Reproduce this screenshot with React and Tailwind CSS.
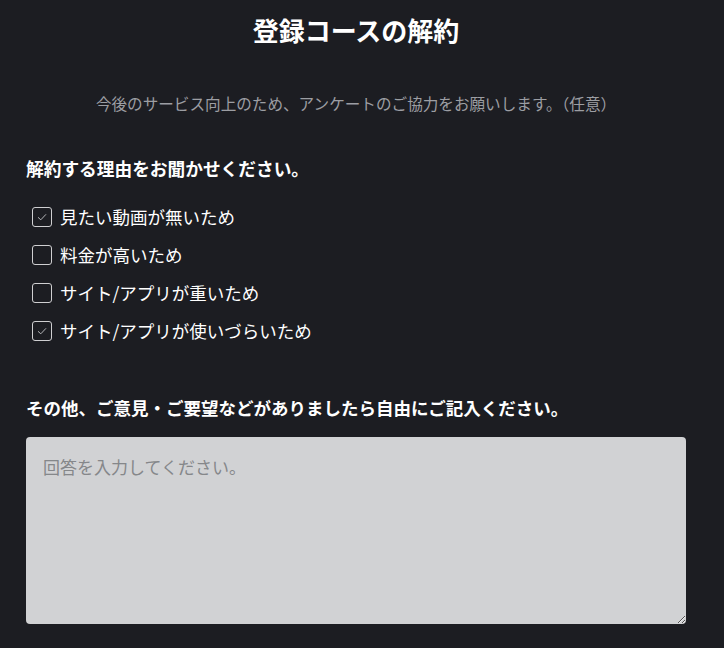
import React from "react";

const reasons = [
  { id: 1, label: "見たい動画が無いため", checked: true },
  { id: 2, label: "料金が高いため", checked: false },
  { id: 3, label: "サイト/アプリが重いため", checked: false },
  { id: 4, label: "サイト/アプリが使いづらいため", checked: true },
];

const Box = ({ checked }) => (
  <span className="w-[20px] h-[20px] mr-[8px] rounded-[3px] border border-[#cfcfd1] flex items-center justify-center shrink-0">
    {checked && (
      <svg width="14" height="14" viewBox="0 0 14 14" fill="none">
        <path d="M3 7.3 L5.8 9.8 L11 4.3" stroke="#b4b5b8" strokeWidth="1" />
      </svg>
    )}
  </span>
);

const App = () => {
  return (
    <div
      className="min-h-[648px] bg-[#1c1d22] text-white"
      style={{ fontFamily: '"Noto Sans CJK JP", "Noto Sans", sans-serif' }}
    >
      <div className="ml-[26px] w-[660px] pt-[12px]">
        <h1 className="text-center text-[26px] leading-[36px] font-bold">
          登録コースの解約
        </h1>
        <p className="mt-[43px] text-center text-[15.6px] leading-[24px] text-[#9c9ea3]">
          今後のサービス向上のため、アンケートのご協力をお願いします。（任意）
        </p>
        <h2 className="mt-[40px] text-[17.7px] leading-[26px] font-bold">
          解約する理由をお聞かせください。
        </h2>
        <div className="mt-[17px] pl-[6px]">
          {reasons.map((r) => (
            <label key={r.id} className="h-[38px] flex items-center text-[17.5px]">
              <Box checked={r.checked} />
              <span>{r.label}</span>
            </label>
          ))}
        </div>
        <h2 className="mt-[45px] text-[17.5px] leading-[26px] font-bold">
          その他、ご意見・ご要望などがありましたら自由にご記入ください。
        </h2>
        <textarea
          className="mt-[16px] block w-full h-[187px] rounded-[4px] bg-[#d1d2d4] px-[17px] pt-[17px] text-[17px] leading-[26px] text-[#333] placeholder:text-[#85878a] outline-none"
          placeholder="回答を入力してください。"
        />
      </div>
    </div>
  );
};

export default App;
